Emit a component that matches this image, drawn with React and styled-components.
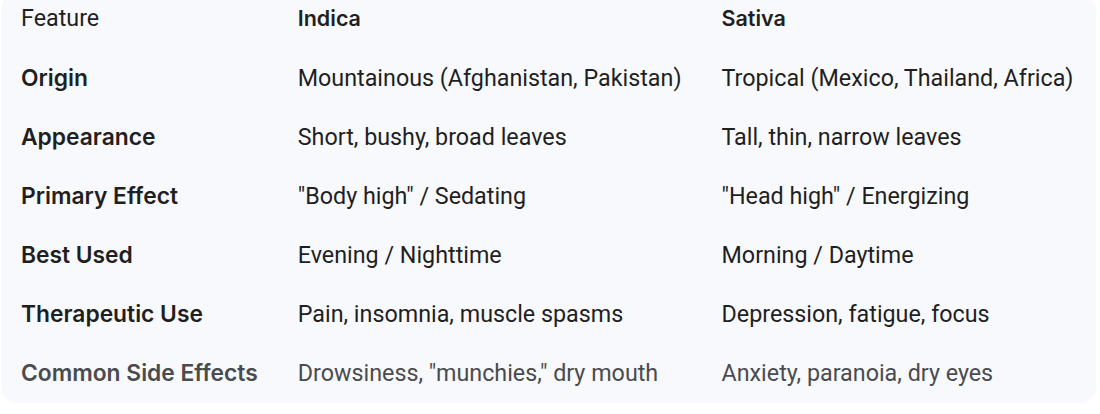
import React from "react";
import styled, { createGlobalStyle } from "styled-components";

const GlobalStyle = createGlobalStyle`
  html, body {
    margin: 0;
    padding: 0;
    background: #ffffff;
  }
  body {
    font-family: Roboto, "Noto Sans", sans-serif;
    color: #1f1f1f;
  }
`;

const Wrapper = styled.div`
  width: 1095px;
  margin: -6px 0 0 1px;
  background: #f8f9fd;
  border-radius: 16px;
  overflow: hidden;
`;

const Table = styled.table`
  border-collapse: collapse;
  font-size: 23.3px;
  line-height: 28px;
`;

const HeadCell = styled.th`
  text-align: left;
  font-family: ${(p) => (p.plain ? "Roboto" : "Inter")}, sans-serif;
  font-weight: ${(p) => (p.plain ? 400 : 600)};
  font-size: ${(p) => (p.plain ? "23.3px" : "21.5px")};
  padding: 10px 20px 17px;
  height: 24px;
  white-space: nowrap;
`;

const Row = styled.tr`
  color: ${(p) => (p.faded ? "#4a4b4e" : "#1f1f1f")};
`;

const LabelCell = styled.td`
  font-family: Inter, sans-serif;
  font-weight: 600;
  font-size: 22.8px;
  padding: 15px 20px 16px;
  white-space: nowrap;
`;

const Cell = styled.td`
  padding: 15px 20px 16px;
  white-space: nowrap;
`;

const rows = [
  ["Origin", "Mountainous (Afghanistan, Pakistan)", "Tropical (Mexico, Thailand, Africa)"],
  ["Appearance", "Short, bushy, broad leaves", "Tall, thin, narrow leaves"],
  ["Primary Effect", '"Body high" / Sedating', '"Head high" / Energizing'],
  ["Best Used", "Evening / Nighttime", "Morning / Daytime"],
  ["Therapeutic Use", "Pain, insomnia, muscle spasms", "Depression, fatigue, focus"],
  ["Common Side Effects", 'Drowsiness, "munchies," dry mouth', "Anxiety, paranoia, dry eyes"],
];

export default function App() {
  return (
    <>
      <GlobalStyle />
      <Wrapper>
        <Table>
          <thead>
            <tr>
              <HeadCell plain>Feature</HeadCell>
              <HeadCell>Indica</HeadCell>
              <HeadCell>Sativa</HeadCell>
            </tr>
          </thead>
          <tbody>
            {rows.map((r, i) => (
              <Row key={r[0]} faded={i === rows.length - 1}>
                <LabelCell>{r[0]}</LabelCell>
                <Cell>{r[1]}</Cell>
                <Cell>{r[2]}</Cell>
              </Row>
            ))}
          </tbody>
        </Table>
      </Wrapper>
    </>
  );
}
